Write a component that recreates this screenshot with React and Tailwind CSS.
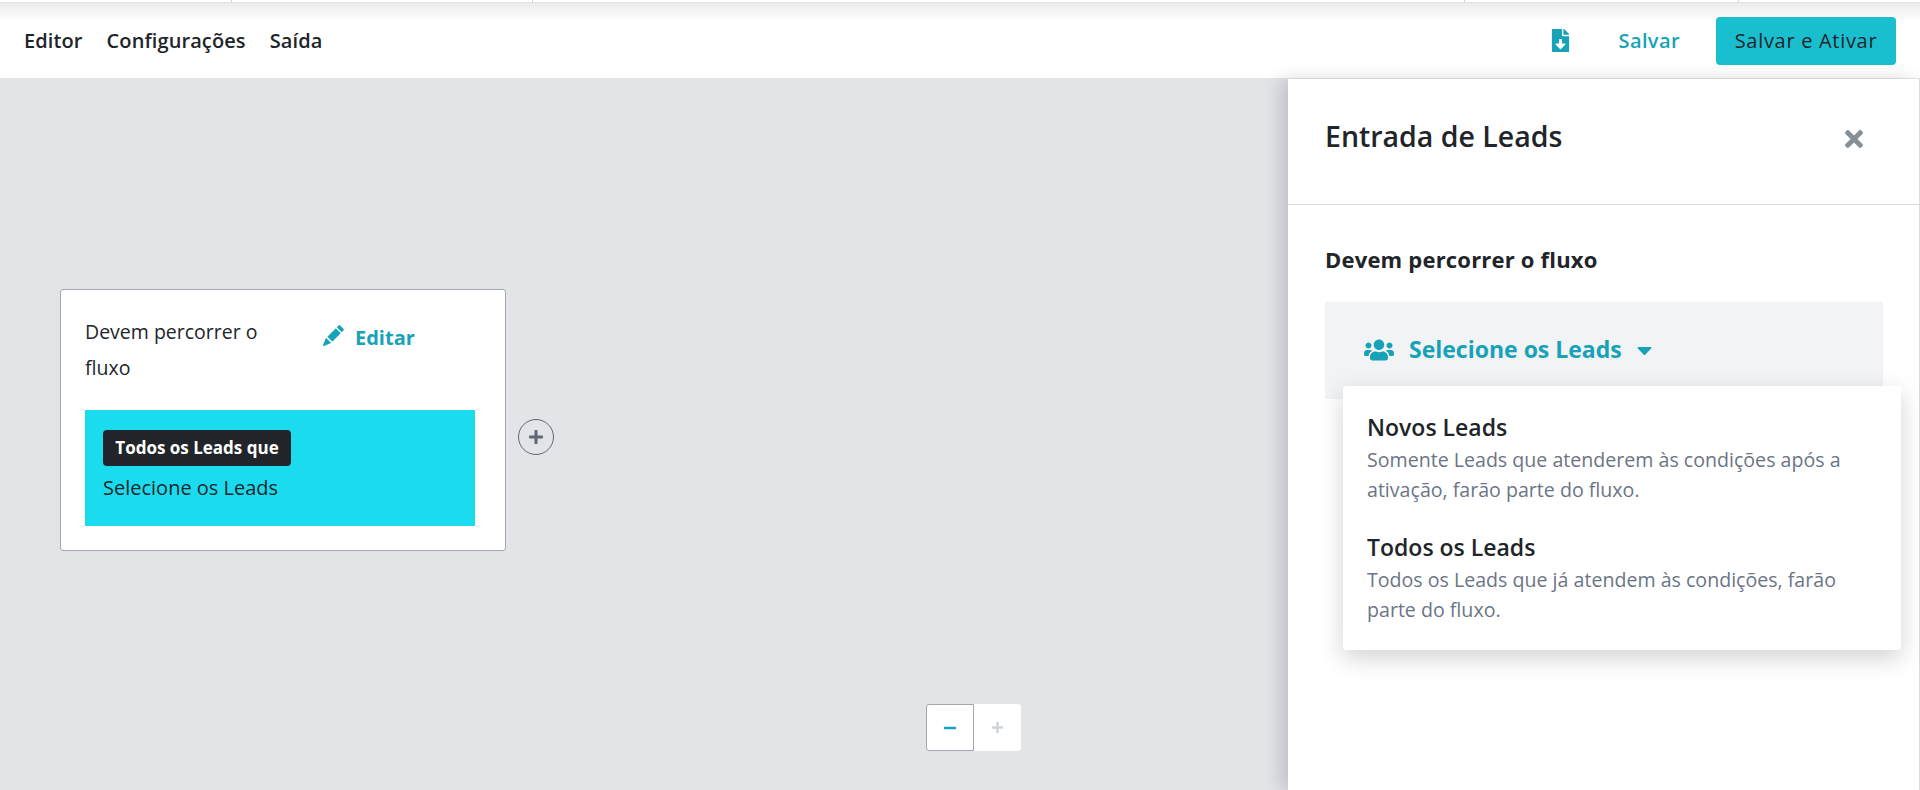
import React from 'react';
import { BsPencilFill } from 'react-icons/bs';
import { FaCaretDown, FaFileDownload, FaMinus, FaPlus, FaTimes, FaUsers } from 'react-icons/fa';

const tabs = ['Editor', 'Configurações', 'Saída'];

const options = [
    { title: 'Novos Leads', desc: 'Somente Leads que atenderem às condições após a ativação, farão parte do fluxo.' },
    { title: 'Todos os Leads', desc: 'Todos os Leads que já atendem às condições, farão parte do fluxo.' },
];

function TopStrip() {
    return (
        <div className="h-[3px] bg-white grid grid-cols-[232px_301px_932px_274px_1fr] border-b border-[#e2e2e2]">
            <div className="border-r border-[#d0d0d0]" />
            <div className="border-r border-[#d0d0d0]" />
            <div className="border-r border-[#d0d0d0]" />
            <div className="border-r border-[#d0d0d0]" />
            <div />
        </div>
    );
}

function Header() {
    return (
        <header className="h-[76px] flex items-center justify-between pl-6 pr-6 bg-gradient-to-b from-[#ececec] via-white via-[25%] to-white border-b border-[#e4e5e8]">
            <nav className="flex items-center gap-6">
                {tabs.map((t) => (
                    <span key={t} className="text-xl font-semibold tracking-[0.1px] text-[#212529]">{t}</span>
                ))}
            </nav>
            <div className="flex items-center">
                <FaFileDownload className="text-[#17a2b8] w-[19px] h-[23px] mr-[49px]" />
                <span className="text-xl font-semibold tracking-[0.4px] text-[#17a2b8] mr-9">Salvar</span>
                <button className="w-[180px] h-12 rounded bg-[#1abfcf] text-xl font-medium tracking-[0.7px] text-[#212529]">Salvar e Ativar</button>
            </div>
        </header>
    );
}

function FlowCard() {
    return (
        <div className="absolute left-[60px] top-[210px] flex items-start">
            <div className="w-[446px] h-[262px] bg-white border border-[#a3a7ae] rounded-[3px] pt-[24px] px-[24px]">
                <div className="flex">
                    <p className="w-[238px] pr-[30px] text-[19.5px] leading-9 text-[#212529]">Devem percorrer o fluxo</p>
                    <div className="flex items-center h-9 mt-[6px] text-[#17a2b8]">
                        <BsPencilFill className="w-[21px] h-[21px] mr-[11px] -mt-[5px]" />
                        <span className="text-xl font-bold">Editar</span>
                    </div>
                </div>
                <div className="h-[116px] w-[390px] mt-[24px] bg-[#1bdcef] pt-5 px-[18px]">
                    <span className="inline-block h-9 leading-9 w-[188px] text-center rounded bg-[#212529] text-white text-[17px] font-bold">Todos os Leads que</span>
                    <p className="mt-2 text-xl leading-7 text-[#212529]">Selecione os Leads</p>
                </div>
            </div>
            <div className="ml-3 mt-[130px] w-9 h-9 rounded-full border-[1.5px] border-[#5f6773] flex items-center justify-center text-[#5f6773]">
                <FaPlus className="w-4 h-4" />
            </div>
        </div>
    );
}

function ZoomControls() {
    return (
        <div className="absolute left-[926px] top-[625px] flex">
            <div className="w-[48px] h-[47px] bg-white border border-[#a3a7ae] rounded-l-[3px] flex items-center justify-center text-[#17a2b8]">
                <FaMinus className="w-[14px] h-[14px]" />
            </div>
            <div className="w-[47px] h-[47px] bg-white rounded-r-[3px] flex items-center justify-center text-[#ced4da]">
                <FaPlus className="w-[13px] h-[13px]" />
            </div>
        </div>
    );
}

function SidePanel() {
    return (
        <aside className="relative w-[632px] shrink-0 bg-white border-r border-[#dcdcdc] shadow-[-8px_0_16px_rgba(0,0,0,0.15)]">
            <div className="h-[126px] flex items-center justify-between pl-[37px] pr-[52px] border-b border-[#d9dadd]">
                <h2 className="text-[28.5px] font-semibold text-[#212529] -mt-[10px]">Entrada de Leads</h2>
                <FaTimes className="w-[26px] h-[26px] -mt-[6px] text-[#868e96]" />
            </div>
            <div className="pl-[37px] pr-[36px] pt-[38px]">
                <h3 className="text-[22px] font-bold tracking-[0.2px] text-[#212529]">Devem percorrer o fluxo</h3>
                <div className="mt-[26px] h-[97px] bg-[#f1f3f5] flex items-center pl-[39px] pb-[2px] text-[#17a2b8]">
                    <FaUsers className="w-[30px] h-[24px] mr-[15px]" />
                    <span className="text-[23px] font-bold">Selecione os Leads</span>
                    <FaCaretDown className="w-[15px] h-[24px] ml-[15px]" />
                </div>
            </div>
            <div className="absolute left-[55px] top-[307px] w-[558px] h-[264px] bg-white rounded-[3px] shadow-[0_8px_24px_rgba(0,0,0,0.18)] pt-[25px] px-6">
                {options.map((o) => (
                    <div key={o.title} className="mb-[26px]">
                        <div className="text-[23px] leading-8 font-semibold text-[#212529]">{o.title}</div>
                        <p className="mt-[2px] text-[19.6px] leading-[30px] text-[#6b7585]">{o.desc}</p>
                    </div>
                ))}
            </div>
        </aside>
    );
}

export default function App() {
    return (
        <div className="h-[790px] overflow-hidden flex flex-col font-['Open_Sans',sans-serif]">
            <TopStrip />
            <Header />
            <main className="flex-1 flex">
                <div className="relative flex-1 bg-[#e2e4e8]">
                    <FlowCard />
                    <ZoomControls />
                </div>
                <SidePanel />
            </main>
        </div>
    );
}
